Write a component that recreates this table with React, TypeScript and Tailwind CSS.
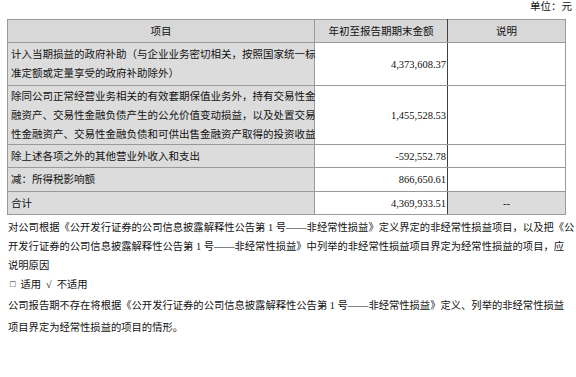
const font = { fontFamily: '"Liberation Serif", "Noto Sans CJK SC", serif' };

const cell = "border border-[#9a9a9a] px-[3px] py-0 align-middle";

export default function App() {
  return (
    <main className="h-[377px] w-[576px] overflow-hidden bg-white text-[10.5px] text-[#111]" style={font}>
      <div className="h-[19px] pr-[4px] text-right leading-[14px]">单位：元</div>

      <table className="ml-[7px] w-[558px] table-fixed border-collapse leading-[19px]">
        <colgroup>
          <col className="w-[307px]" />
          <col className="w-[133px]" />
          <col className="w-[118px]" />
        </colgroup>
        <thead>
          <tr className="h-[23px] bg-[#d8d8d8]">
            <th className={`${cell} font-normal`}>项目</th>
            <th className={`${cell} border-r-[#404040] font-normal`}>年初至报告期期末金额</th>
            <th className={`${cell} font-normal`}>说明</th>
          </tr>
        </thead>
        <tbody>
          <tr className="h-[43px]">
            <td className={`${cell} whitespace-nowrap bg-[#dcdcdc] text-left`}>
              计入当期损益的政府补助（与企业业务密切相关，按照国家统一标
              <br />
              准定额或定量享受的政府补助除外）
            </td>
            <td className={`${cell} border-r-[#404040] pr-[1px] text-right`}>4,373,608.37</td>
            <td className={cell}></td>
          </tr>
          <tr className="h-[59px]">
            <td className={`${cell} whitespace-nowrap bg-[#dcdcdc] text-left`}>
              除同公司正常经营业务相关的有效套期保值业务外，持有交易性金
              <br />
              融资产、交易性金融负债产生的公允价值变动损益，以及处置交易
              <br />
              性金融资产、交易性金融负债和可供出售金融资产取得的投资收益
            </td>
            <td className={`${cell} border-r-[#404040] pr-[1px] text-right`}>1,455,528.53</td>
            <td className={cell}></td>
          </tr>
          <tr className="h-[23px]">
            <td className={`${cell} bg-[#dcdcdc]`}>除上述各项之外的其他营业外收入和支出</td>
            <td className={`${cell} border-r-[#404040] pr-[1px] text-right`}>-592,552.78</td>
            <td className={cell}></td>
          </tr>
          <tr className="h-[24px]">
            <td className={`${cell} bg-[#dcdcdc]`}>减：所得税影响额</td>
            <td className={`${cell} border-r-[#404040] pr-[1px] text-right`}>866,650.61</td>
            <td className={cell}></td>
          </tr>
          <tr className="h-[23px]">
            <td className={`${cell} bg-[#dcdcdc]`}>合计</td>
            <td className={`${cell} border-r-[#404040] pr-[1px] text-right`}>4,369,933.51</td>
            <td className={`${cell} bg-[#dcdcdc] text-center`}>--</td>
          </tr>
        </tbody>
      </table>

      <div className="mt-[3px] pl-[8px] text-[10.3px] leading-[19px] whitespace-nowrap">
        <div>对公司根据《公开发行证券的公司信息披露解释性公告第 1 号——非经常性损益》定义界定的非经常性损益项目，以及把《公</div>
        <div>开发行证券的公司信息披露解释性公告第 1 号——非经常性损益》中列举的非经常性损益项目界定为经常性损益的项目，应</div>
        <div>说明原因</div>
        <div className="flex items-center gap-[5px] pl-[2px]">
          <span className="text-[9px]">□</span>
          <span>适用</span>
          <span>√</span>
          <span>不适用</span>
        </div>
        <div className="mt-[2px]">公司报告期不存在将根据《公开发行证券的公司信息披露解释性公告第 1 号——非经常性损益》定义、列举的非经常性损益</div>
        <div className="mt-[3px]">项目界定为经常性损益的项目的情形。</div>
      </div>
    </main>
  );
}
